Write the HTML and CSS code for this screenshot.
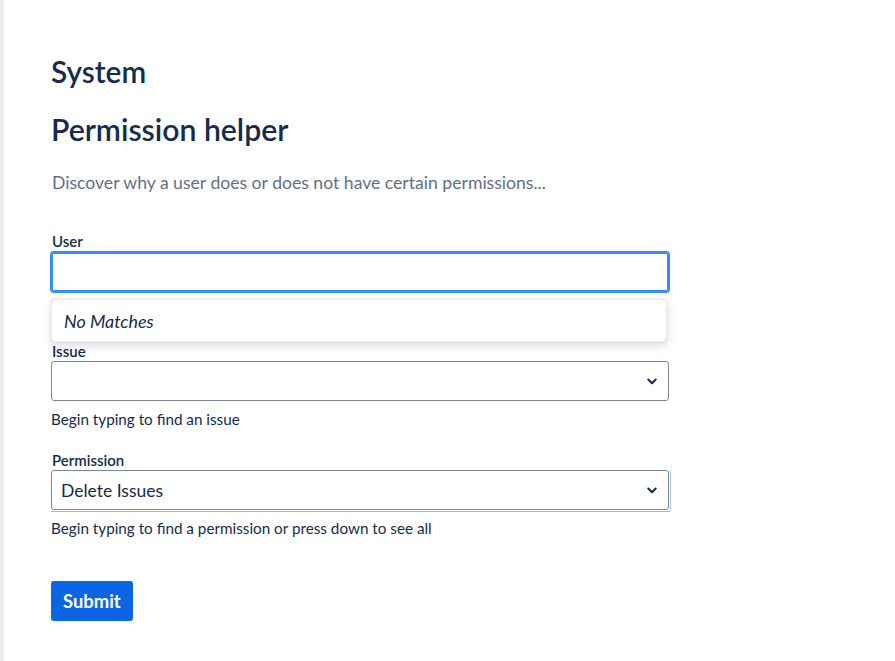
FILE: index.html
```html
<!DOCTYPE html>
<html>
<head>
<meta charset="utf-8">
<link rel="stylesheet" href="styles.css">
</head>
<body>
<div class="page">
  <aside class="rail"></aside>
  <main class="content">
    <h2 class="section-title">System</h2>
    <h1 class="page-title">Permission helper</h1>
    <p class="intro">Discover why a user does or does not have certain permissions...</p>

    <form class="form">
      <div class="field field-user">
        <label class="label">User</label>
        <div class="input input-focused"></div>
        <div class="dropdown">
          <span class="no-matches">No Matches</span>
        </div>
      </div>

      <div class="field field-issue">
        <label class="label">Issue</label>
        <div class="select">
          <span class="select-value"></span>
          <svg class="chevron" width="10" height="7" viewBox="0 0 10 7"><path d="M1.3 1.5 L5 5.2 L8.7 1.5" fill="none" stroke="#172b4d" stroke-width="2" stroke-linecap="round" stroke-linejoin="round"/></svg>
        </div>
        <div class="help">Begin typing to find an issue</div>
      </div>

      <div class="field field-perm">
        <label class="label">Permission</label>
        <div class="select select-ring">
          <span class="select-value">Delete Issues</span>
          <svg class="chevron" width="10" height="7" viewBox="0 0 10 7"><path d="M1.3 1.5 L5 5.2 L8.7 1.5" fill="none" stroke="#172b4d" stroke-width="2" stroke-linecap="round" stroke-linejoin="round"/></svg>
        </div>
        <div class="help">Begin typing to find a permission or press down to see all</div>
      </div>

      <button type="button" class="submit">Submit</button>
    </form>
  </main>
</div>
</body>
</html>
```

FILE: styles.css
```css
html, body {
  margin: 0;
  padding: 0;
  background: #ffffff;
}
body {
  font-family: "Lato", "Noto Sans", sans-serif;
  color: #172b4d;
}
.page {
  display: flex;
  min-height: 661px;
}
.rail {
  width: 4px;
  flex: 0 0 4px;
  background: #ebecf0;
}
.content {
  flex: 1;
  padding: 0 0 0 47px;
}
.section-title {
  margin: 55px 0 0 0;
  font-size: 29.8px;
  line-height: 34px;
  font-weight: 600;
  color: #172b4d;
}
.page-title {
  margin: 22px 0 0 0;
  font-size: 30.2px;
  line-height: 36px;
  font-weight: 600;
  color: #172b4d;
}
.intro {
  margin: 24px 0 0 1px;
  font-size: 17.6px;
  line-height: 24px;
  color: #626f86;
}
.form {
  margin-top: 38px;
  width: 620px;
}
.field {
  position: relative;
  display: flex;
  flex-direction: column;
}
.label {
  font-size: 15px;
  line-height: 16px;
  font-weight: 600;
  color: #172b4d;
  margin-left: 1px;
  margin-bottom: 2px;
}
.input {
  box-sizing: border-box;
  height: 42px;
  width: 620px;
  margin-left: -1px;
  border-radius: 4px;
  background: #fff;
}
.input-focused {
  border: 2px solid #388bff;
  box-shadow: inset 0 0 0 1px #388bff;
}
.dropdown {
  box-sizing: border-box;
  margin-top: 6px;
  width: 616px;
  height: 43px;
  background: #fff;
  border: 1px solid #ebecf0;
  border-radius: 4px;
  box-shadow: 0 4px 10px rgba(9, 30, 66, 0.15), 0 0 1px rgba(9, 30, 66, 0.2);
  display: flex;
  align-items: center;
  padding-left: 12px;
}
.no-matches {
  font-style: italic;
  font-size: 17.9px;
  color: #172b4d;
}
.field-issue {
  margin-top: 1px;
}
.select {
  position: relative;
  box-sizing: border-box;
  height: 40px;
  width: 618px;
  border: 1px solid #7a869a;
  border-radius: 3px;
  display: flex;
  align-items: center;
  padding: 0 11px 0 9px;
  background: #fff;
}
.select-value {
  flex: 1;
  font-size: 17.5px;
  color: #172b4d;
}
.select-ring::after {
  content: "";
  position: absolute;
  left: -1px;
  right: -3px;
  top: -1px;
  bottom: -3px;
  border-right: 1px solid #a9c9f5;
  border-bottom: 1px solid #8fbaf5;
  border-radius: 0 0 2px 0;
  pointer-events: none;
}
.help {
  margin-top: 10px;
  font-size: 15.25px;
  line-height: 16px;
  color: #172b4d;
}
.field-perm {
  margin-top: 25px;
}
.submit {
  margin-top: 45px;
  height: 40px;
  padding: 0 12px;
  border: none;
  border-radius: 3px;
  background: #0c66e4;
  color: #ffffff;
  font-family: "Lato", "Noto Sans", sans-serif;
  font-size: 18.4px;
  font-weight: 700;
  cursor: pointer;
}
```
